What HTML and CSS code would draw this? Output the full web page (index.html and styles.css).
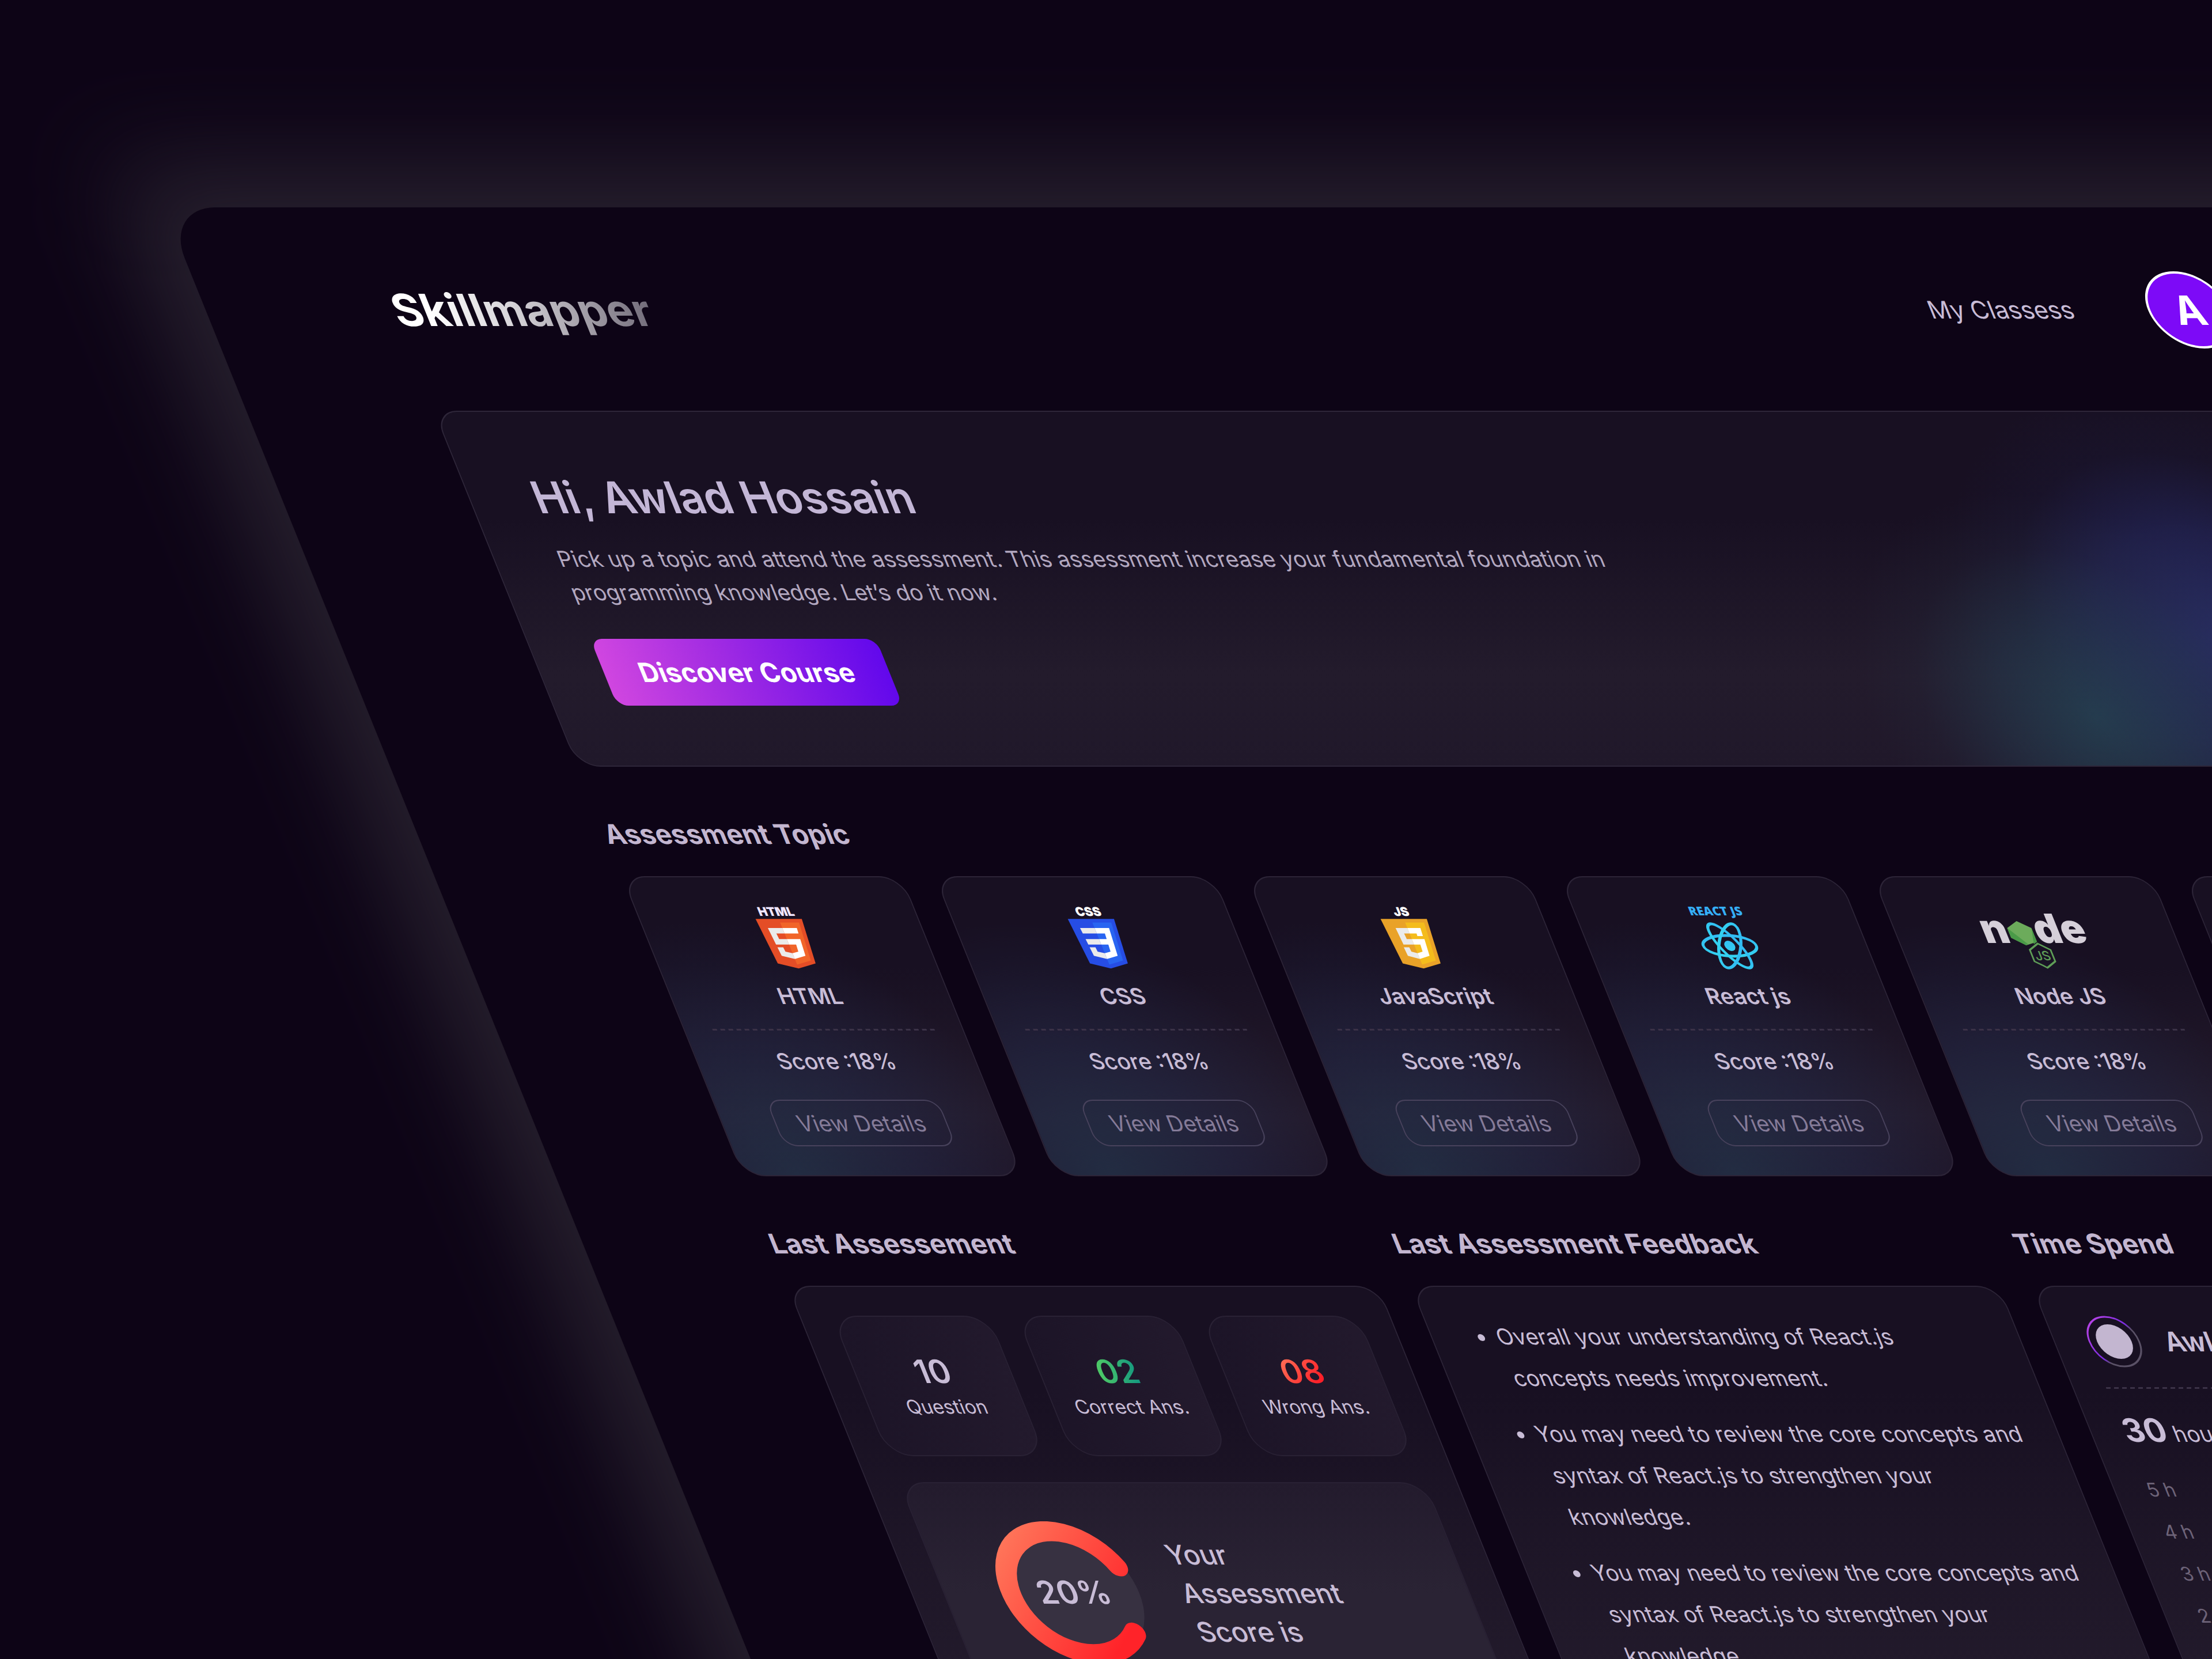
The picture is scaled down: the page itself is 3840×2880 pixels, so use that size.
FILE: index.html
```html
<!DOCTYPE html>
<html lang="en">
<head>
    <meta charset="utf-8">
    <title>Skillmapper</title>
    <link rel="stylesheet" href="styles.css">
</head>
<body>

<div class="stage">
<div class="board">

    <header class="header">
        <a class="logo" href="#">Skillmapper</a>
        <nav class="nav">
            <a href="#">My Classess</a>
            <button class="avatar" type="button">A</button>
        </nav>
    </header>

    <section class="banner">
        <h1>Hi, Awlad Hossain</h1>
        <p>Pick up a topic and attend the assessment. This assessment increase your fundamental foundation in<br>programming knowledge. Let’s do it now.</p>
        <button class="btn-primary" type="button">Discover Course</button>
    </section>

    <h2>Assessment Topic</h2>
    <section class="topics">
        <article class="card topic">
            <svg class="topic-icon" viewBox="0 0 100 108">
                <text class="badge" x="50" y="16" fill="#f0e6ff">HTML</text>
                <g transform="translate(3 20) scale(.73 .69)">
                    <path fill="#E44D26" d="M19 113.900L9 1.700h110L109 113.900l-45 12.500z"/>
                    <path fill="#F16529" d="M64 116.800l36.400-10.100 8.500-95.900H64z"/>
                    <path fill="#EBEBEB" d="M64 52.500H45.800l-1.300-14.100H64V24.600H29.500l.3 3.700 3.400 37.900H64zm0 35.700l-15.400-4.100-1-11H33.800l1.900 21.600L64 102.500z"/>
                    <path fill="#fff" d="M64 52.500v13.700h16.900l-1.600 17.900L64 88.200v14.300l28.200-7.800 3.700-42.200zm0-27.900v13.800h33.200l1.200-13.800z"/>
                </g>
            </svg>
            <h3>HTML</h3>
            <hr>
            <p>Score :18%</p>
            <button class="btn-outline" type="button">View Details</button>
        </article>
        <article class="card topic">
            <svg class="topic-icon" viewBox="0 0 100 108">
                <text class="badge" x="50" y="16" fill="#fff">CSS</text>
                <g transform="translate(3 20) scale(.73 .69)">
                    <path fill="#264DE4" d="M19 113.900L9 1.700h110L109 113.900l-45 12.500z"/>
                    <path fill="#2965F1" d="M64 116.800l36.400-10.100 8.500-95.900H64z"/>
                    <path fill="#EBEBEB" d="M64 24.600H29.500l1.300 13.800H64zM64 52.500H32l1.300 13.700H64zM64 88.200l-15.400-4.100-1-11H33.800l1.900 21.600L64 102.500z"/>
                    <path fill="#fff" d="M64 24.600h34.400L92.200 94.700 64 102.500V88.200l15.300-4.100 1.600-17.900H64V52.500h18.100l1.200-14.100H64z"/>
                </g>
            </svg>
            <h3>CSS</h3>
            <hr>
            <p>Score :18%</p>
            <button class="btn-outline" type="button">View Details</button>
        </article>
        <article class="card topic">
            <svg class="topic-icon" viewBox="0 0 100 108">
                <text class="badge" x="50" y="16" fill="#fff">JS</text>
                <g transform="translate(3 20) scale(.73 .69)">
                    <path fill="#E9A228" d="M19 113.900L9 1.700h110L109 113.900l-45 12.500z"/>
                    <path fill="#F4BC1C" d="M64 116.800l36.400-10.100 8.500-95.900H64z"/>
                    <path fill="#EBEBEB" d="M64 24.600H36l3 41.600h25V52.500H52l-1-14.100h13zM64 88.200l-13-4.100-1-11H37l1.500 21.600L64 102.500z"/>
                    <path fill="#fff" d="M64 24.600h31l-1.800 20.400H80l.6-6.600H64zM64 52.500h30L90 94.700 64 102.500V88.200l13.500-4.100L79 66.200H64z"/>
                </g>
            </svg>
            <h3>JavaScript</h3>
            <hr>
            <p>Score :18%</p>
            <button class="btn-outline" type="button">View Details</button>
        </article>
        <article class="card topic">
            <svg class="topic-icon" viewBox="0 0 100 108">
                <defs>
                    <linearGradient id="atom" x1="0" y1="0" x2="0" y2="108" gradientUnits="userSpaceOnUse">
                        <stop offset="0" stop-color="#2f9df5"/>
                        <stop offset="1" stop-color="#35dff0"/>
                    </linearGradient>
                </defs>
                <text class="badge badge-react" x="53" y="15" fill="#35aff8">REACT JS</text>
                <circle cx="54" cy="68" r="9" fill="url(#atom)"/>
                <g fill="none" stroke="url(#atom)" stroke-width="5">
                    <ellipse cx="54" cy="68" rx="46" ry="18"/>
                    <ellipse cx="54" cy="68" rx="43" ry="17" transform="rotate(60 54 68)"/>
                    <ellipse cx="54" cy="68" rx="43" ry="17" transform="rotate(120 54 68)"/>
                </g>
            </svg>
            <h3>React js</h3>
            <hr>
            <p>Score :18%</p>
            <button class="btn-outline" type="button">View Details</button>
        </article>
        <article class="card topic">
            <svg class="topic-icon" viewBox="0 0 180 108">
                <text class="node-letter" x="22" y="63">n</text>
                <path fill="#6cab5b" d="M67 25l21 12v24L67 67 46 54V37z"/>
                <path fill="#4a9a48" d="M46 37v17l21 13 4-2zM88 37v24l-7 4z"/>
                <text class="node-letter" x="114" y="63">d</text>
                <text class="node-letter" x="158" y="63">e</text>
                <path fill="none" stroke="#5f9e57" stroke-width="3" d="M82 102l-12-7V75l18-11 18 11v20l-18 11-6-4"/>
                <text class="node-js" x="88" y="93">JS</text>
            </svg>
            <h3>Node JS</h3>
            <hr>
            <p>Score :18%</p>
            <button class="btn-outline" type="button">View Details</button>
        </article>
        <article class="card topic"></article>
    </section>

    <section class="reports">
        <div class="report">
            <h2>Last Assessement</h2>
            <div class="card last">
                <div class="stats">
                    <div class="stat"><strong>10</strong><span>Question</span></div>
                    <div class="stat"><strong class="good">02</strong><span>Correct Ans.</span></div>
                    <div class="stat"><strong class="bad">08</strong><span>Wrong Ans.</span></div>
                </div>
                <div class="result">
                    <svg class="ring" viewBox="0 0 244 244">
                        <defs>
                            <linearGradient id="score" x1="0" y1="0" x2="1" y2="1">
                                <stop offset="0" stop-color="#ff7e5f"/>
                                <stop offset=".85" stop-color="#ff2329"/>
                            </linearGradient>
                        </defs>
                        <circle cx="122" cy="122" r="114" fill="#373141"/>
                        <path d="M202 190A105 105 0 1 1 217 77" fill="none" stroke="url(#score)" stroke-width="34" stroke-linecap="round"/>
                        <text x="124" y="141">20%</text>
                    </svg>
                    <p>Your<br>Assessment<br>Score is</p>
                </div>
            </div>
        </div>

        <div class="report">
            <h2>Last Assessment Feedback</h2>
            <div class="card feedback">
                <ul>
                    <li>Overall your understanding of React.js<br>concepts needs improvement.</li>
                    <li>You may need to review the core concepts and<br>syntax of React.js to strengthen your<br>knowledge.</li>
                    <li>You may need to review the core concepts and<br>syntax of React.js to strengthen your<br>knowledge.</li>
                </ul>
            </div>
        </div>

        <div class="report">
            <h2>Time Spend</h2>
            <div class="card time">
                <div class="user">
                    <svg class="user-dot" viewBox="0 0 90 90">
                        <defs>
                            <linearGradient id="halo" x1="0" y1="0" x2="1" y2="1">
                                <stop offset="0" stop-color="#c94be8"/>
                                <stop offset=".5" stop-color="#7a2be0"/>
                                <stop offset=".6" stop-color="#5a5166"/>
                            </linearGradient>
                        </defs>
                        <circle cx="45" cy="45" r="43" fill="none" stroke="url(#halo)" stroke-width="3"/>
                        <circle cx="45" cy="45" r="30" fill="#c3b6d0"/>
                    </svg>
                    <span>Awlad Hossain</span>
                </div>
                <hr>
                <p class="hours"><strong>30</strong> hours</p>
                <ul class="scale">
                    <li>5 h</li>
                    <li>4 h</li>
                    <li>3 h</li>
                    <li>2 h</li>
                    <li>1 h</li>
                </ul>
            </div>
        </div>
    </section>

</div>
</div>

</body>
</html>
```
FILE: styles.css
```css
* {
    box-sizing: border-box;
}

body {
    margin: 0;
    padding: 360px 0 0 285px;
    height: 100vh;
    overflow: hidden;
    background: #0d0416;
    color: #c8bcd6;
    font-family: Inter, "Liberation Sans", sans-serif;
    font-size: 38px;
    line-height: 44px;
}

h1, h2, h3, p, ul {
    margin: 0;
    padding: 0;
    font-weight: 500;
}

ul {
    list-style: none;
}

a {
    color: inherit;
    text-decoration: none;
}

button {
    font-family: inherit;
    padding: 0;
    cursor: pointer;
}

hr {
    width: 100%;
    height: 3px;
    margin: 0;
    border: 0;
    background: repeating-linear-gradient(90deg, #3b3247 0 8px, transparent 8px 14px);
}

/* the whole board leans to the right */
.stage {
    position: relative;
    width: 100vw;
    transform: skewX(22deg);
    transform-origin: 0 0;
}

/* soft light behind the board */
.stage::before {
    content: "";
    position: absolute;
    inset: -80px;
    border-radius: 140px;
    background: #251e2c;
    filter: blur(80px);
}

.board {
    position: relative;
    padding: 111px 316px 0 325px;
    border-radius: 88px;
    background: #0d0416;
}

.header,
.nav {
    display: flex;
    align-items: center;
    justify-content: space-between;
}

.header {
    margin-bottom: 108px;
    padding-right: 10px;
}

.logo {
    font-size: 77px;
    font-weight: 700;
    line-height: 88px;
    background: linear-gradient(100deg, #fff 15%, #d8d6da 45%, #6f6977 100%);
    -webkit-background-clip: text;
    background-clip: text;
    color: transparent;
}

.nav {
    gap: 130px;
    font-size: 42px;
    font-weight: 400;
}

.avatar {
    width: 142px;
    height: 134px;
    border: 4px solid #fff;
    border-radius: 50%;
    background: #7d0af7;
    color: #fff;
    font-size: 70px;
    font-weight: 700;
}

.banner {
    height: 618px;
    padding: 104px 110px;
    border: 2px solid #2e2639;
    border-radius: 40px;
    background:
        radial-gradient(circle 390px at 2670px 530px, rgba(38, 70, 86, .75), rgba(38, 62, 82, .5) 40%, rgba(38, 50, 70, .15) 75%, transparent),
        radial-gradient(circle 440px at 2940px 400px, rgba(40, 46, 104, .9), rgba(36, 40, 96, .6) 45%, rgba(28, 30, 70, .2) 75%, transparent),
        linear-gradient(#181022 0%, #181022 30%, #231b2c 75%, #20182a 100%);
}

.banner h1 {
    margin-bottom: 34px;
    font-size: 76px;
    font-weight: 600;
    line-height: 88px;
    color: #c3b6d6;
}

.banner p {
    margin-bottom: 52px;
    font-weight: 400;
    line-height: 58px;
    color: #b3a8c0;
}

.btn-primary {
    width: 496px;
    height: 116px;
    border: 0;
    border-radius: 20px;
    background: linear-gradient(90deg, #d046e0, #a42de2 40%, #6208ec);
    color: #fff;
    font-size: 46px;
    font-weight: 700;
}

h2 {
    margin: 89px 0 45px;
    font-size: 47px;
    font-weight: 700;
    line-height: 56px;
    color: #c3b6d0;
}

.card {
    border: 2px solid #2c2437;
    border-radius: 40px;
    background: linear-gradient(#181022 20%, #231b2c 80%);
}

.topics {
    display: grid;
    grid-template-columns: repeat(6, 1fr);
    gap: 57px;
}

.topic {
    display: flex;
    flex-direction: column;
    align-items: center;
    height: 521px;
    padding: 51px 48px 50px;
    background:
        radial-gradient(circle 440px at 20% 100%, rgba(36, 56, 80, .65), rgba(36, 46, 80, .42) 50%, transparent),
        linear-gradient(#181022 30%, #231a2b 80%, #1f1527);
}

.topic-icon {
    height: 108px;
    margin-bottom: 25px;
    overflow: visible;
}

.topic h3 {
    margin-bottom: 35px;
    font-size: 38px;
    font-weight: 600;
}

.topic hr {
    margin-bottom: 31px;
}

.topic p {
    margin-bottom: 45px;
}

.badge {
    font: 900 21px Inter, sans-serif;
    text-anchor: middle;
}

.badge-react {
    font: 800 21px "Open Sans", sans-serif;
}

.node-letter {
    font: 900 70px Inter, sans-serif;
    fill: #d5cfd9;
    text-anchor: middle;
}

.node-js {
    font: 500 22px Inter, sans-serif;
    fill: #5f9e57;
    text-anchor: middle;
}

.btn-outline {
    width: 299px;
    height: 81px;
    border: 2px solid #48425c;
    border-radius: 24px;
    background: none;
    color: #857b98;
    font-size: 38px;
}

.reports {
    display: grid;
    grid-template-columns: 1026fr 1022fr 1039fr;
    gap: 56px;
}

.report .card {
    height: 900px;
}

.last {
    padding: 50px 54px;
}

.stats {
    display: grid;
    grid-template-columns: repeat(3, 1fr);
    gap: 48px;
    margin-bottom: 45px;
}

.stat {
    height: 244px;
    padding: 63px 0;
    border: 2px solid #292134;
    border-radius: 44px;
    background: linear-gradient(100deg, #1c1427, #231a2d);
    text-align: center;
    font-size: 33px;
    line-height: 40px;
}

.stat strong {
    display: block;
    width: max-content;
    margin: 0 auto 9px;
    font-size: 56px;
    font-weight: 600;
    line-height: 64px;
}

.stat span {
    font-weight: 400;
}

.good,
.bad {
    -webkit-background-clip: text;
    background-clip: text;
    color: transparent;
}

.good {
    background-image: linear-gradient(100deg, #55cf63, #0f9482);
}

.bad {
    background-image: linear-gradient(135deg, #ff7e5f, #ff1f28 80%);
}

.result {
    display: flex;
    align-items: center;
    gap: 66px;
    padding: 66px 98px;
    border: 2px solid #292134;
    border-radius: 44px;
    background: linear-gradient(#231b2d, #2a2334 50%);
    font-size: 47px;
    line-height: 67px;
}

.ring {
    width: 248px;
    height: 248px;
}

.ring text {
    fill: #c8bcd6;
    font-size: 54px;
    font-weight: 600;
    text-anchor: middle;
}

.feedback {
    padding: 50px 58px 50px 112px;
    line-height: 72px;
}

.feedback li {
    position: relative;
    margin-bottom: 25px;
    font-weight: 400;
    white-space: nowrap;
}

.feedback li::before {
    content: "";
    position: absolute;
    top: 32px;
    left: -33px;
    width: 12px;
    height: 12px;
    border-radius: 50%;
    background: #c8bcd6;
}

.time {
    padding: 50px 56px;
}

.user {
    display: flex;
    align-items: center;
    gap: 40px;
    margin-bottom: 34px;
    font-size: 47px;
    font-weight: 600;
}

.user-dot {
    width: 94px;
    height: 90px;
}

.hours {
    margin: 40px 0 29px;
    font-weight: 400;
    line-height: 64px;
}

.hours strong {
    font-size: 56px;
    font-weight: 700;
}

.scale li {
    font-size: 33px;
    font-weight: 400;
    line-height: 73px;
    color: #6d6378;
}
```
